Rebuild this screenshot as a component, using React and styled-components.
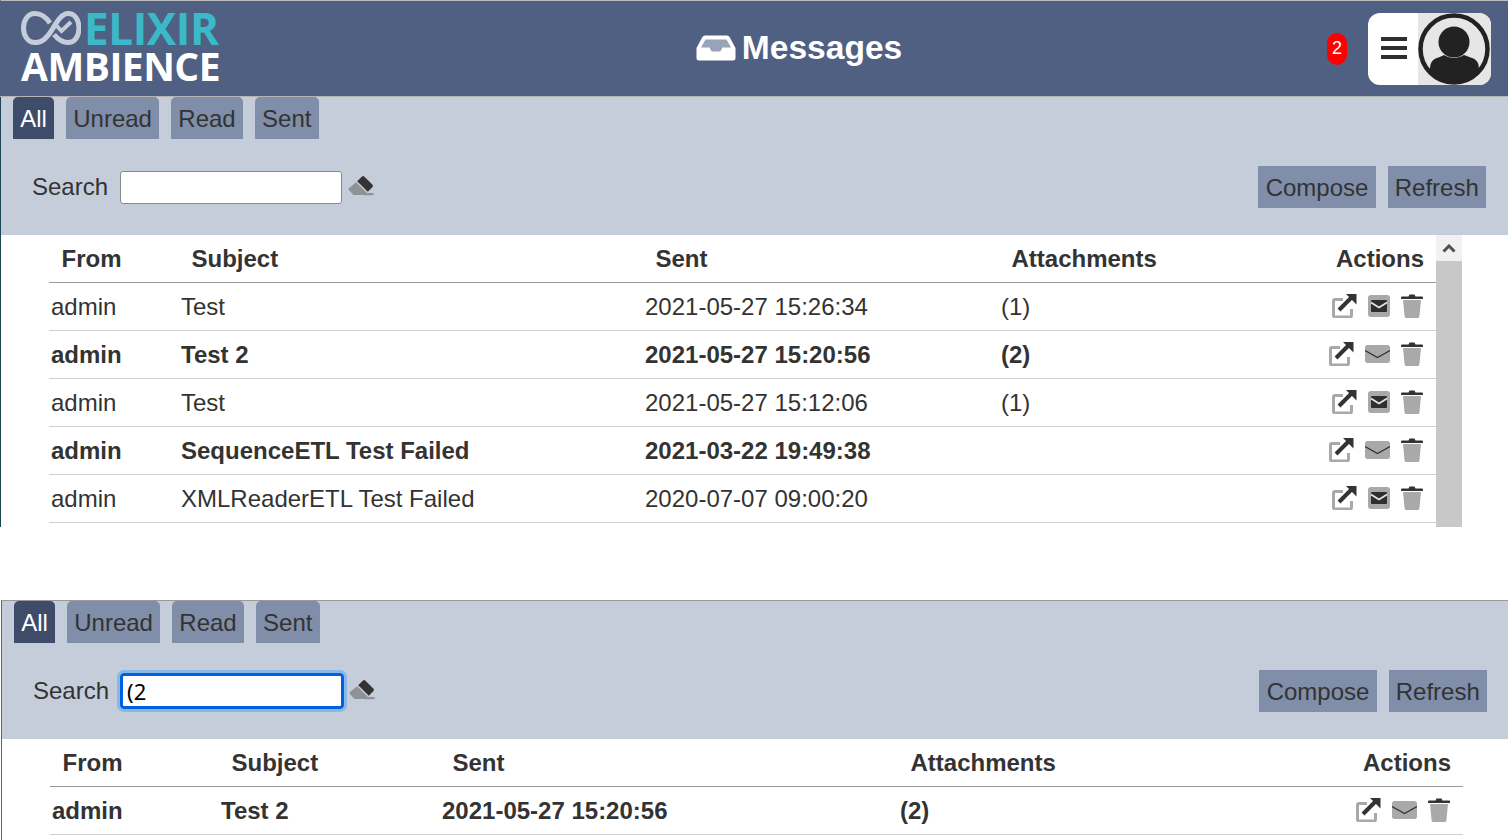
import React from "react";
import styled, { createGlobalStyle } from "styled-components";

const Global = createGlobalStyle`
  html, body { margin: 0; padding: 0; background: #fff; overflow: hidden; }
  body { font-family: "Liberation Sans", Arial, sans-serif; color: #333; }
  * { box-sizing: border-box; }
`;

const Page = styled.div`
  width: 1508px;
  height: 840px;
  overflow: hidden;
  display: flex;
  flex-direction: column;
  gap: 73px;
`;

const Pane = styled.section`
  width: 1508px;
  margin-left: ${(p) => (p.$indent ? "1px" : "0")};
  flex: none;
  height: ${(p) => (p.$indent ? "240px" : "527px")};
  display: flex;
  flex-direction: column;
  border-left: 1px solid ${(p) => (p.$indent ? "#5d6675" : "#1d4654")};
  border-top: 1px solid ${(p) => (p.$indent ? "#9a9a9a" : "#bdbdbd")};
`;

const Header = styled.header`
  height: 96px;
  flex: none;
  background: #4f6083;
  border-bottom: 1px solid #b5b5b5;
  display: flex;
  align-items: center;
  padding: 0 17px 0 21px;
  margin-left: -1px;
`;

const Logo = styled.div`
  width: 200px;
  flex: none;
  display: flex;
  flex-direction: column;
  font-family: "Open Sans", sans-serif;
  font-weight: 700;
  margin-top: -3px;
`;

const LogoTop = styled.div`
  display: flex;
  align-items: center;
  gap: 3px;
  height: 38px;
`;

const LogoElixir = styled.span`
  color: #3cb9c8;
  font-size: 44px;
  line-height: 38px;
  letter-spacing: -0.4px;
`;

const LogoAmbience = styled.span`
  color: #fff;
  font-size: 39px;
  line-height: 38px;
  letter-spacing: -0.5px;
  white-space: nowrap;
`;

const Title = styled.h1`
  flex: 1;
  margin: -2px 0 0;
  padding-left: 50px;
  display: flex;
  justify-content: center;
  align-items: center;
  gap: 6px;
  color: #fff;
  font-size: 33.6px;
  font-weight: 700;
  line-height: 36px;
`;

const Badge = styled.span`
  width: 20px;
  height: 32px;
  border-radius: 10px;
  background: #f00;
  color: #fff;
  font-size: 18px;
  display: flex;
  align-items: center;
  justify-content: center;
  margin-right: 21px;
`;

const UserBox = styled.div`
  width: 123px;
  height: 72px;
  border-radius: 12px;
  background: #fff;
  overflow: hidden;
  display: flex;
  margin-top: 1px;
`;

const Burger = styled.div`
  width: 50px;
  flex: none;
  display: flex;
  align-items: center;
  justify-content: center;
  padding-left: 2px;
  padding-bottom: 2px;
`;

const Avatar = styled.div`
  flex: 1;
  background: #e6e6e6;
  display: flex;
  align-items: center;
  justify-content: center;
`;

const Controls = styled.div`
  height: 138px;
  flex: none;
  background: #c5cddb;
  display: flex;
  flex-direction: column;
  padding-left: 12px;
`;

const Tabs = styled.nav`
  display: flex;
  gap: 12px;
`;

const Tab = styled.button`
  height: 42px;
  border: 0;
  padding: 2px 7.2px 0;
  border-radius: 5px 5px 0 0;
  font: 24px "Liberation Sans", Arial, sans-serif;
  color: ${(p) => (p.$active ? "#fff" : "#333")};
  background: ${(p) => (p.$active ? "#3e4c6a" : "#808ea9")};
`;

const ToolRow = styled.div`
  display: flex;
  align-items: center;
  height: 42px;
  margin-top: 27px;
  padding-left: 19px;
  padding-right: 22px;
`;

const SearchLabel = styled.label`
  font-size: 24px;
  color: #333;
  margin-right: 12px;
`;

const SearchInput = styled.input`
  width: 222px;
  height: 33px;
  border: 1px solid #8a8a8a;
  border-radius: 3px;
  background: #fff;
  font: 22px "Noto Sans", "Open Sans", sans-serif;
  color: #000;
  padding: 0 5px;
  ${(p) =>
    p.$focus &&
    `
    height: 36px;
    width: 224px;
    border: 3px solid #0060df;
    outline: 3px solid #8ab8e6;
    outline-offset: 0;
    margin: 0 -1px 0 -1px;
    border-radius: 4px;
    padding: 0 4px;
  `}
`;

const Eraser = styled.svg`
  width: 26px;
  height: 22px;
  margin-left: 6px;
  margin-top: -2px;
  flex: none;
`;

const Spacer = styled.div`
  flex: 1;
`;

const ActionButton = styled.button`
  height: 42px;
  border: 0;
  padding: 1px 7.2px 0;
  margin-left: 12px;
  font: 24px "Liberation Sans", Arial, sans-serif;
  color: #333;
  background: #808ea9;
`;

const Body = styled.div`
  flex: 1;
  background: #fff;
  display: flex;
  padding-left: 48px;
  padding-right: 46px;
  min-height: 0;
`;

const Table = styled.div`
  flex: 1;
  min-width: 0;
`;

const Row = styled.div`
  display: grid;
  grid-template-columns: ${(p) => p.$cols};
  height: 48px;
  align-items: center;
  border-bottom: 1px solid ${(p) => (p.$head ? "#9a9a9a" : "#cfcfcf")};
  font-size: 24px;
  font-weight: ${(p) => (p.$bold ? 700 : 400)};
  color: #333;
`;

const HeadCell = styled.div`
  font-weight: 700;
  padding-left: 12.5px;
  text-align: ${(p) => (p.$right ? "right" : "left")};
  padding-right: ${(p) => (p.$right ? "12px" : "0")};
`;

const Cell = styled.div`
  padding-left: 2px;
  white-space: nowrap;
`;

const ActionsCell = styled.div`
  display: flex;
  justify-content: flex-end;
  align-items: center;
  padding-right: 13px;
  height: 100%;
  padding-bottom: 1px;
`;

const IconSlot = styled.svg`
  flex: none;
  display: block;
  margin-left: ${(p) => p.$gap || 0}px;
`;

const Scrollbar = styled.div`
  width: 26px;
  flex: none;
  background: #c8c8c8;
`;

const ScrollUp = styled.div`
  height: 26px;
  background: #f1f1f1;
  display: flex;
  align-items: center;
  justify-content: center;
`;

const LogoMark = () => (
  <svg width="60" height="34" viewBox="0 0 60 34">
    <path
      d="M29 12C25 6 20 2.500 14 2.500 7 2.500 2.500 9 2.500 17S7 31.500 14 31.500c7 0 11-4 16-11 5-8 10-18 17-18 7 0 11 6.500 11 14.500s-4 14.500-11 14.500c-6 0-10-3-14-8"
      fill="none"
      stroke="#c5cddb"
      strokeWidth="5"
    />
    <path d="M33 12l7.500 8L50 11" fill="none" stroke="#c5cddb" strokeWidth="4" />
  </svg>
);

const InboxIcon = () => (
  <svg width="40" height="26" viewBox="0 0 40 26">
    <path d="M9 0.5h22a3 3 0 0 1 2.6 1.5L39.5 13v10a2.5 2.5 0 0 1-2.5 2.5H3A2.5 2.5 0 0 1 .5 23V13L6.4 2A3 3 0 0 1 9 .5z" fill="#fff" />
    <path d="M9.500 4.500h21l4.600 8h-8.600l-2.200 4h-8.600l-2.200-4H5z" fill="#98a3ba" />
  </svg>
);

const BurgerIcon = () => (
  <svg width="26" height="23" viewBox="0 0 26 23">
    <path d="M0 0h26v4H0zM0 9h26v4H0zM0 18h26v4H0z" fill="#2f2f2f" />
  </svg>
);

const AvatarIcon = () => (
  <svg width="73" height="72" viewBox="0 0 73 72">
    <circle cx="36" cy="36" r="33.500" fill="#e6e6e6" stroke="#222" strokeWidth="4.500" />
    <circle cx="36" cy="29" r="15.500" fill="#222" />
    <path d="M12 58c0-7 1-11 7-13 3-1 5-2 7-3 3 2 7 3 10 3s7-1 10-3c3 1 5 2 8 3 6 2 7 6 7 13-5 7-15 11-25 11S17 65 12 58z" fill="#222" />
  </svg>
);

const EraserIcon = () => (
  <Eraser viewBox="0 0 26 22">
    <path d="M14 1.500a1.600 1.600 0 0 1 2.200 0l8.300 8.300a1.600 1.600 0 0 1 0 2.200l-4.700 4.700L9.200 6.200z" fill="#333" />
    <path d="M8.200 7.200l10.600 10.600L16.600 20H5.500L1 15.300a1.600 1.600 0 0 1 0-2.200z" fill="#8f9296" />
    <path d="M16 18h9.500v2.200H15z" fill="#8f9296" />
  </Eraser>
);

const OpenIcon = ({ gap }) => (
  <IconSlot $gap={gap} width="25" height="24" viewBox="0 0 25 24">
    <path d="M11 5.500H3a1.500 1.500 0 0 0-1.500 1.500v14.500A1.500 1.500 0 0 0 3 23h15a1.500 1.500 0 0 0 1.500-1.500V15" fill="none" stroke="#a9a9a9" strokeWidth="3" />
    <path d="M7 16L19 4" stroke="#333" strokeWidth="4" />
    <path d="M14 0H24.500V10.500z" fill="#333" />
  </IconSlot>
);

const ReadMailIcon = ({ gap }) => (
  <IconSlot $gap={gap} width="22" height="22" viewBox="0 0 22 22">
    <rect width="22" height="22" rx="3" fill="#a9a9a9" />
    <rect x="3" y="5" width="16" height="12" rx="1" fill="#2f2f2f" />
    <path d="M3 7.500l8 5 8-5" fill="none" stroke="#e8e8e8" strokeWidth="1.600" />
  </IconSlot>
);

const UnreadMailIcon = ({ gap }) => (
  <IconSlot $gap={gap} width="25" height="18" viewBox="0 0 25 18">
    <rect width="25" height="18" rx="2.500" fill="#a9a9a9" />
    <path d="M0 5.500l12.500 7 12.500-7" fill="none" stroke="#333" strokeWidth="1.400" />
  </IconSlot>
);

const TrashIcon = ({ gap }) => (
  <IconSlot $gap={gap} width="22" height="24" viewBox="0 0 22 24">
    <path d="M2 6h18l-1.600 16.500a1.600 1.600 0 0 1-1.600 1.500H5.200a1.600 1.600 0 0 1-1.600-1.500z" fill="#a9a9a9" />
    <path d="M0 3.400a1 1 0 0 1 1-1h6.500L8.500 .5h5l1 1.900H21a1 1 0 0 1 1 1V5H0z" fill="#333" />
  </IconSlot>
);

const messages = [
  { from: "admin", subject: "Test", sent: "2021-05-27 15:26:34", att: "(1)", unread: false },
  { from: "admin", subject: "Test 2", sent: "2021-05-27 15:20:56", att: "(2)", unread: true },
  { from: "admin", subject: "Test", sent: "2021-05-27 15:12:06", att: "(1)", unread: false },
  { from: "admin", subject: "SequenceETL Test Failed", sent: "2021-03-22 19:49:38", att: "", unread: true },
  { from: "admin", subject: "XMLReaderETL Test Failed", sent: "2020-07-07 09:00:20", att: "", unread: false },
];

const RowActions = ({ unread }) => (
  <ActionsCell>
    <OpenIcon />
    {unread ? <UnreadMailIcon gap={11} /> : <ReadMailIcon gap={11} />}
    <TrashIcon gap={11} />
  </ActionsCell>
);

const MessageTable = ({ rows, cols }) => (
  <Table>
    <Row $head $cols={cols}>
      <HeadCell>From</HeadCell>
      <HeadCell>Subject</HeadCell>
      <HeadCell>Sent</HeadCell>
      <HeadCell>Attachments</HeadCell>
      <HeadCell $right>Actions</HeadCell>
    </Row>
    {rows.map((m, i) => (
      <Row key={i} $bold={m.unread} $cols={cols}>
        <Cell>{m.from}</Cell>
        <Cell>{m.subject}</Cell>
        <Cell>{m.sent}</Cell>
        <Cell>{m.att}</Cell>
        <RowActions unread={m.unread} />
      </Row>
    ))}
  </Table>
);

const ControlsBar = ({ query, focus }) => (
  <Controls>
    <Tabs>
      <Tab $active>All</Tab>
      <Tab>Unread</Tab>
      <Tab>Read</Tab>
      <Tab>Sent</Tab>
    </Tabs>
    <ToolRow>
      <SearchLabel>Search</SearchLabel>
      <SearchInput $focus={focus} defaultValue={query} />
      <EraserIcon />
      <Spacer />
      <ActionButton>Compose</ActionButton>
      <ActionButton>Refresh</ActionButton>
    </ToolRow>
  </Controls>
);

export default function App() {
  return (
    <Page>
      <Global />
      <Pane>
        <Header>
          <Logo>
            <LogoTop>
              <LogoMark />
              <LogoElixir>ELIXIR</LogoElixir>
            </LogoTop>
            <LogoAmbience>AMBIENCE</LogoAmbience>
          </Logo>
          <Title>
            <InboxIcon />
            Messages
          </Title>
          <Badge>2</Badge>
          <UserBox>
            <Burger>
              <BurgerIcon />
            </Burger>
            <Avatar>
              <AvatarIcon />
            </Avatar>
          </UserBox>
        </Header>
        <ControlsBar query="" />
        <Body>
          <MessageTable rows={messages} cols="130px 464px 356px 1fr 200px" />
          <Scrollbar>
            <ScrollUp>
              <svg width="14" height="9" viewBox="0 0 14 9">
                <path d="M1.500 7.500L7 2l5.500 5.500" fill="none" stroke="#505050" strokeWidth="3" />
              </svg>
            </ScrollUp>
          </Scrollbar>
        </Body>
      </Pane>
      <Pane $indent>
        <ControlsBar query="(2" focus />
        <Body>
          <MessageTable rows={messages.slice(1, 2)} cols="169px 221px 458px 1fr 200px" />
        </Body>
      </Pane>
    </Page>
  );
}
